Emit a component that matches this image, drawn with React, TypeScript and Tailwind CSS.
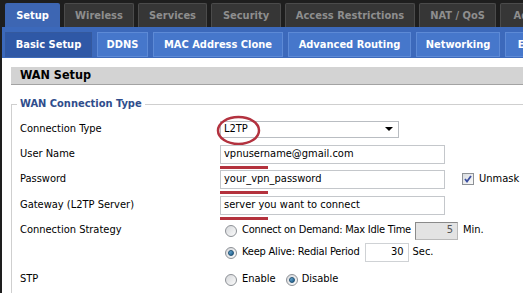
import React from "react";

const body = "font-['DejaVu_Sans_Condensed','Liberation_Sans',sans-serif]";

const topTabs = [
  { label: "Setup", w: "w-[55px]", active: true },
  { label: "Wireless", w: "w-[70px]" },
  { label: "Services", w: "w-[69px]" },
  { label: "Security", w: "w-[70px]" },
  { label: "Access Restrictions", w: "w-[130px]" },
  { label: "NAT / QoS", w: "w-[77px]" },
  { label: "Administration", w: "w-[110px]" },
];

const subTabs = [
  { label: "Basic Setup", w: "w-[87px]", active: true },
  { label: "DDNS", w: "w-[51px]" },
  { label: "MAC Address Clone", w: "w-[130px]" },
  { label: "Advanced Routing", w: "w-[123px]" },
  { label: "Networking", w: "w-[84px]" },
  { label: "EoIP Tunnel", w: "w-[90px]" },
];

function Radio({ checked }: { checked?: boolean }) {
  return (
    <span className="flex h-[12px] w-[12px] shrink-0 items-center justify-center rounded-full border border-[#8d9196] bg-gradient-to-br from-[#d6d8db] to-[#fbfbfb]">
      {checked && (
        <span className="h-[6px] w-[6px] rounded-full border border-[#1d4f73] bg-gradient-to-br from-[#6fb3dc] to-[#1c5a86]" />
      )}
    </span>
  );
}

function Underline() {
  return <div className="absolute left-0 top-full mt-[2px] h-[3px] w-[48px] bg-[#b4323d]" />;
}

function Row({ label, children, h = "h-[25px]" }: { label?: string; children: React.ReactNode; h?: string }) {
  return (
    <div className={`flex ${h} items-center`}>
      <div className="w-[200px] shrink-0">{label}</div>
      <div className="flex items-center">{children}</div>
    </div>
  );
}

export default function App() {
  return (
    <div className={`h-[293px] w-[523px] overflow-hidden bg-white text-[11px] text-black ${body}`}>
      <div className="w-[640px]">
        {/* main tabs */}
        <div className="flex h-[27px] items-end gap-[4px] bg-[#1e1e1e] pl-[5px] text-[11px] font-bold">
          {topTabs.map((t) => (
            <div
              key={t.label}
              className={`flex h-[24px] shrink-0 items-center justify-center rounded-t-[2px] pt-[2px] ${t.w} ${
                t.active
                  ? "bg-[#3d66b3] text-white"
                  : "border border-b-0 border-[#4b4b4b] bg-[#363636] text-[#8e8e8e]"
              }`}
            >
              {t.label}
            </div>
          ))}
        </div>

        {/* sub tabs */}
        <div className="flex h-[31px] items-end gap-[5px] border-l-[2px] border-[#1e1e1e] bg-[#3c69bb] pb-[1px] pl-[3px] text-[11px] font-bold text-white">
          {subTabs.map((t) => (
            <div
              key={t.label}
              className={`flex h-[25px] shrink-0 items-center justify-center border pt-[2px] ${t.w} ${
                t.active ? "border-[#34599e] bg-[#2f58a6]" : "border-[#5d8ad6] bg-[#4677cb]"
              }`}
            >
              {t.label}
            </div>
          ))}
        </div>

        <div className="h-[300px] border-l-[2px] border-[#1e1e1e] pl-[9px] pt-[9px]">
          <div className="flex h-[18px] items-center border-b border-[#a3a3a3] bg-[#d3d3d3] pl-[9px] text-[12.5px] font-bold">
            WAN Setup
          </div>

          <fieldset className="mt-[11px] border border-[#cfcfcf] pb-[10px] pl-[8px]">
            <legend className="ml-[-3px] px-[3px] text-[11px] font-bold text-[#2f4d8c]">WAN Connection Type</legend>

            <div className="mt-[4px]">
              <Row label="Connection Type">
                <div className="relative flex h-[17px] w-[179px] items-center justify-between border border-[#b9bdc2] bg-white pl-[3px] pr-[5px]">
                  <span>L2TP</span>
                  <span className="h-0 w-0 border-x-[4px] border-t-[4px] border-x-transparent border-t-black" />
                  <svg className="absolute left-[-5px] top-[-7px]" width="45" height="31" viewBox="0 0 45 31">
                    <ellipse cx="22.5" cy="15.5" rx="20.5" ry="13.5" fill="none" stroke="#b3323f" strokeWidth="2.5" />
                  </svg>
                </div>
              </Row>
              <Row label="User Name">
                <div className="relative">
                  <div className="flex h-[19px] w-[225px] items-center border border-[#c4c7cb] pl-[3px]">vpnusername@gmail.com</div>
                  <Underline />
                </div>
              </Row>
              <Row label="Password">
                <div className="relative">
                  <div className="flex h-[19px] w-[225px] items-center border border-[#c4c7cb] pl-[3px]">your_vpn_password</div>
                  <Underline />
                </div>
                <span className="ml-[17px] flex h-[12px] w-[12px] items-center justify-center border border-[#8d9196] bg-gradient-to-br from-[#dadde0] to-[#fafafa]">
                  <svg width="10" height="10" viewBox="0 0 10 10">
                    <path d="M2 5 L4 7.5 L8 2" fill="none" stroke="#3b4fa0" strokeWidth="1.8" />
                  </svg>
                </span>
                <span className="ml-[5px]">Unmask</span>
              </Row>
              <Row label="Gateway (L2TP Server)" h="h-[27px]">
                <div className="relative">
                  <div className="flex h-[19px] w-[225px] items-center border border-[#c4c7cb] pl-[3px]">server you want to connect</div>
                  <Underline />
                </div>
              </Row>
              <Row label="Connection Strategy" h="h-[24px]">
                <span className="ml-[5px]">
                  <Radio />
                </span>
                <span className="ml-[5px] tracking-[-0.25px]">Connect on Demand: Max Idle Time</span>
                <div className="ml-[4px] flex h-[18px] w-[43px] items-center justify-end border border-[#b9b9b9] border-l-[#8a8a8a] border-t-[#8a8a8a] bg-[#e3e3e3] pr-[4px] text-[#555]">
                  5
                </div>
                <span className="ml-[5px]">Min.</span>
              </Row>
              <Row h="h-[20px]">
                <span className="ml-[5px]">
                  <Radio checked />
                </span>
                <span className="ml-[5px] tracking-[-0.2px]">Keep Alive: Redial Period</span>
                <div className="ml-[5px] flex h-[19px] w-[44px] items-center justify-end border border-[#cfd2d5] pr-[4px]">30</div>
                <span className="ml-[4px]">Sec.</span>
              </Row>
              <div className="h-[6px]" />
              <Row label="STP" h="h-[22px]">
                <span className="ml-[5px]">
                  <Radio />
                </span>
                <span className="ml-[5px]">Enable</span>
                <span className="ml-[10px]">
                  <Radio checked />
                </span>
                <span className="ml-[4px]">Disable</span>
              </Row>
            </div>
          </fieldset>
        </div>
      </div>
    </div>
  );
}
